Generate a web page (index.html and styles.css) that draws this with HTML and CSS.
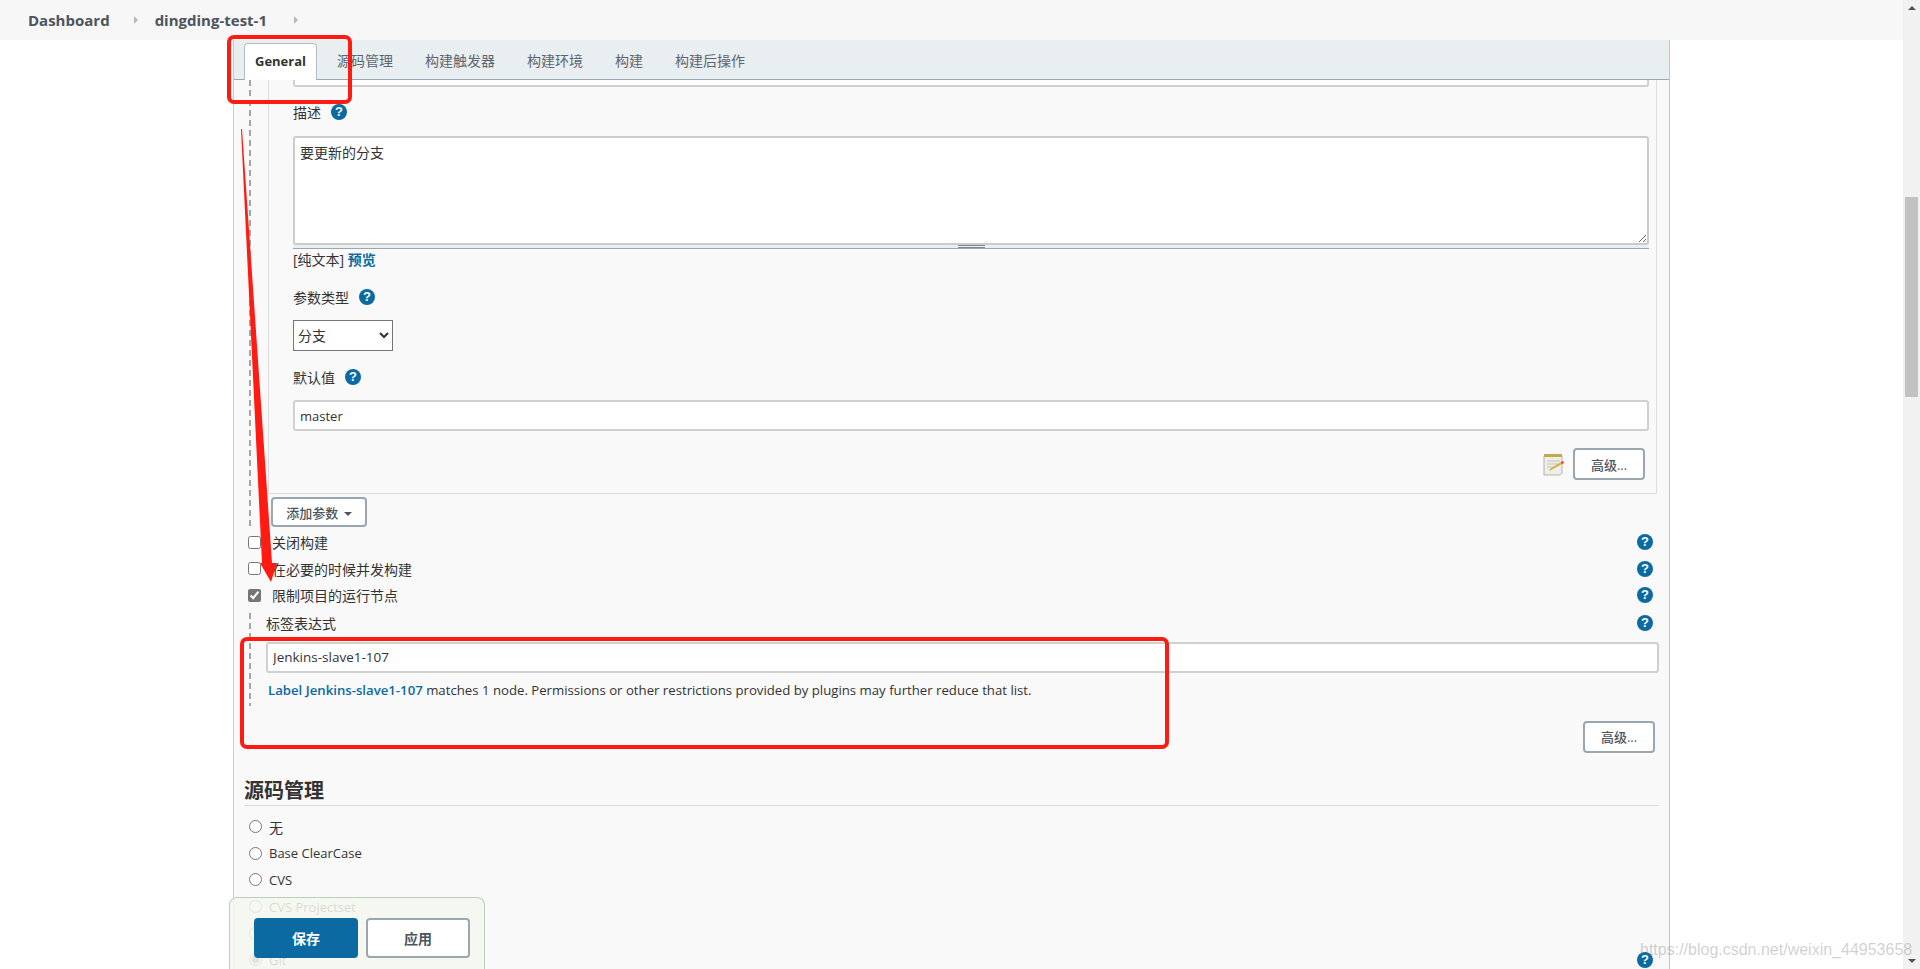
FILE: index.html
```html
<!DOCTYPE html>
<html lang="zh-CN">
<head>
  <meta charset="UTF-8">
  <title>dingding-test-1 Config</title>
  <link rel="stylesheet" href="styles.css">
</head>
<body>
  <div class="page">
    <header class="crumbs">
      <a class="crumb">Dashboard</a>
      <span class="crumb-arrow"></span>
      <a class="crumb">dingding-test-1</a>
      <span class="crumb-arrow"></span>
    </header>

    <main class="panel">
      <nav class="tabs">
        <a class="tab active">General</a>
        <a class="tab">源码管理</a>
        <a class="tab">构建触发器</a>
        <a class="tab">构建环境</a>
        <a class="tab">构建</a>
        <a class="tab">构建后操作</a>
      </nav>

      <form class="config">
        <div class="bracket">
          <div class="param-block">
            <div class="field-stub"></div>

            <div class="field-label desc-label">描述 <span class="help">?</span></div>
            <textarea class="text-area">要更新的分支</textarea>
            <div class="grip-bar"><span class="grip"></span></div>
            <div class="preview-line">[纯文本] <a class="link-bold">预览</a></div>

            <div class="field-label type-label">参数类型 <span class="help">?</span></div>
            <select class="type-select">
              <option>分支</option>
            </select>

            <div class="field-label default-label">默认值 <span class="help">?</span></div>
            <input class="text-input latin" type="text" value="master">

            <div class="block-actions">
              <svg class="notepad" width="23" height="23" viewBox="0 0 23 23">
                <path d="M2 3h18v17l-2 2H2z" fill="#eeeee8" stroke="#b4b4ac"/>
                <rect x="2" y="1" width="18" height="3" fill="#c4a850"/>
                <path d="M5 8h13M5 11h11M5 14h7" stroke="#c4c4bc"/>
                <path d="M7 18l1-2 11-7 1 2-11 6z" fill="#e0a72e"/>
                <path d="M19 9l2-1 1 2-2 1z" fill="#d8392b"/>
              </svg>
              <button class="btn latin" type="button">高级...</button>
            </div>
          </div>
          <button class="btn add-btn latin" type="button">添加参数 <span class="caret"></span></button>
        </div>

        <label class="check-row">
          <input type="checkbox"><span class="check-text">关闭构建</span><span class="help">?</span>
        </label>
        <label class="check-row">
          <input type="checkbox"><span class="check-text">在必要的时候并发构建</span><span class="help">?</span>
        </label>
        <label class="check-row">
          <input type="checkbox" checked><span class="check-text">限制项目的运行节点</span><span class="help">?</span>
        </label>

        <div class="bracket label-group">
          <div class="label-row">标签表达式 <span class="help">?</span></div>
          <input class="text-input node-input" type="text" value="Jenkins-slave1-107">
          <div class="match-msg"><a class="link-bold">Label Jenkins-slave1-107</a> matches 1 node. Permissions or other restrictions provided by plugins may further reduce that list.</div>
        </div>

        <div class="adv-row"><button class="btn latin" type="button">高级...</button></div>

        <h2 class="section-title">源码管理</h2>
        <div class="scm-list">
          <label class="radio-row"><input type="radio" name="scm"><span>无</span></label>
          <label class="radio-row"><input type="radio" name="scm"><span class="latin">Base ClearCase</span></label>
          <label class="radio-row"><input type="radio" name="scm"><span class="latin">CVS</span></label>
          <label class="radio-row"><input type="radio" name="scm"><span class="latin">CVS Projectset</span></label>
          <label class="radio-row"><input type="radio" name="scm"></label>
          <label class="radio-row"><input type="radio" name="scm" checked><span class="latin">Git</span><span class="help">?</span></label>
        </div>
      </form>
    </main>

    <div class="bottom-bar">
      <button class="btn-save" type="button">保存</button>
      <button class="btn-apply" type="button">应用</button>
    </div>
  </div>

  <div class="scrollbar">
    <span class="sb-up"></span>
    <span class="sb-thumb"></span>
    <span class="sb-down"></span>
  </div>

  <!-- screenshot annotations -->
  <svg class="marks" width="1920" height="969" viewBox="0 0 1920 969">
    <rect x="229" y="37" width="121" height="65" rx="5" fill="none" stroke="#ff1a12" stroke-width="4"/>
    <rect x="242" y="639" width="925" height="108" rx="5" fill="none" stroke="#ff1a12" stroke-width="4"/>
    <polygon points="241,129 242,129 272,563 277,563 271,582 260,563 262,563" fill="#ff1a12"/>
  </svg>

  <div class="watermark">https://blog.csdn.net/weixin_44953658</div>
</body>
</html>
```

FILE: styles.css
```css
* {
  box-sizing: border-box;
}

html, body {
  margin: 0;
  height: 969px;
  overflow: hidden;
}

body {
  display: flex;
  background: #fff;
  color: #333;
  font-family: "Open Sans", "Noto Sans CJK SC", sans-serif;
  font-size: 14px;
}

.latin {
  font-size: 13px;
}

.page {
  flex: 1;
  height: 969px;
  overflow: hidden;
}

/* breadcrumbs */
.crumbs {
  display: flex;
  align-items: center;
  height: 40px;
  padding-left: 28px;
  background: #f7f7f7;
  font-size: 15px;
  font-weight: 700;
  color: #4d545d;
}

.crumb-arrow {
  width: 0;
  height: 0;
  margin: 0 17px 0 24px;
  border-left: 4px solid #b8b8b8;
  border-top: 4px solid transparent;
  border-bottom: 4px solid transparent;
}

.crumb-arrow:last-child {
  margin-left: 27px;
}

/* main panel */
.panel {
  width: 1437px;
  height: 929px;
  margin-left: 233px;
  border-left: 1px solid #ccc;
  border-right: 1px solid #c4c4c4;
  background: #f9f9f9;
  overflow: hidden;
}

.tabs {
  display: flex;
  align-items: flex-end;
  height: 40px;
  padding-left: 10px;
  background: #e9eef1;
  border-bottom: 1px solid #9aa7b0;
  font-size: 14px;
  color: #5b6670;
}

.tab {
  display: flex;
  align-items: center;
  height: 36px;
  padding: 0 16px 2px;
}

.tab.active {
  width: 73px;
  height: 37px;
  margin: 0 4px -1px 0;
  padding: 0 0 3px;
  justify-content: center;
  background: #fff;
  border: 1px solid #b4bdc4;
  border-bottom: none;
  border-radius: 4px 4px 0 0;
  font-size: 13px;
  font-weight: 700;
  color: #333;
}

.config {
  padding: 0 10px;
}

.bracket {
  margin-left: 5px;
  padding-left: 2px;
  background: linear-gradient(#a5a5a5 60%, transparent 60%) left top / 2px 10px repeat-y;
}

.param-block {
  height: 414px;
  margin: 0 2px 0 17px;
  padding: 0 7px 0 24px;
  border-left: 1px solid #ddd;
  border-right: 1px solid #ddd;
  border-bottom: 1px solid #ddd;
}

.field-stub {
  height: 7px;
  background: #fff;
  border: 2px solid #d0d0d0;
  border-top: none;
  border-radius: 0 0 3px 3px;
}

.field-label {
  display: flex;
  align-items: center;
  gap: 10px;
  height: 20px;
}

.desc-label {
  margin-top: 15px;
}

.type-label {
  margin-top: 17px;
}

.default-label {
  margin-top: 16px;
}

.help {
  display: inline-block;
  flex: none;
  width: 16px;
  height: 16px;
  border-radius: 50%;
  background: #0b6aa2;
  color: #fff;
  font-family: "Liberation Sans", sans-serif;
  font-size: 13px;
  font-weight: 700;
  line-height: 16px;
  text-align: center;
}

.text-area {
  display: block;
  width: 100%;
  height: 109px;
  margin-top: 14px;
  padding: 4px 5px;
  border: 2px solid #ccc;
  border-radius: 3px;
  background: #fff;
  color: #333;
  font: inherit;
}

.grip-bar {
  display: flex;
  justify-content: center;
  height: 4px;
  background: #e9eef1;
  border-bottom: 1px solid #9aa7b0;
}

.grip {
  width: 27px;
  height: 3px;
  border-top: 1px solid #7d8a92;
  border-bottom: 1px solid #7d8a92;
}

.preview-line {
  height: 20px;
  margin-top: 1px;
  line-height: 20px;
}

.link-bold {
  color: #0b6aa2;
  font-weight: 600;
}

.type-select {
  display: block;
  width: 100px;
  height: 31px;
  margin-top: 13px;
  padding: 0;
  border: 1px solid #767676;
  border-radius: 0;
  background: #fff;
  color: #333;
  font: inherit;
}

.text-input {
  display: block;
  width: 100%;
  height: 31px;
  margin-top: 13px;
  padding: 0 5px;
  border: 2px solid #d0d0d0;
  border-radius: 3px;
  background: #fff;
  color: #333;
  font-family: inherit;
}

.block-actions {
  display: flex;
  justify-content: flex-end;
  align-items: center;
  gap: 8px;
  margin-top: 17px;
  padding-right: 4px;
}

.btn {
  width: 72px;
  height: 32px;
  border: 2px solid #9aa7b0;
  border-radius: 4px;
  background: #fff;
  color: #4d545d;
  font-family: inherit;
  font-weight: 500;
}

.add-btn {
  display: block;
  width: 96px;
  height: 30px;
  margin: 3px 0 0 20px;
}

.caret {
  display: inline-block;
  margin-left: 2px;
  vertical-align: 2px;
  border-top: 4px solid #4d545d;
  border-left: 4px solid transparent;
  border-right: 4px solid transparent;
}

/* option rows */
.check-row {
  display: flex;
  align-items: center;
  height: 26.500px;
  margin-left: 4px;
  padding-right: 6px;
}

.check-row:first-of-type {
  margin-top: 2px;
}

.check-row input {
  width: 13px;
  height: 13px;
  margin: 0 11px 0 0;
  accent-color: #767676;
}

.check-text {
  flex: 1;
}

.label-group {
  height: 93px;
  margin-top: 4px;
}

.label-row {
  display: flex;
  justify-content: space-between;
  align-items: center;
  height: 20px;
  padding: 0 6px 0 15px;
}

.node-input {
  width: 1393px;
  margin: 9px 0 0 15px;
  font-size: 13.500px;
}

.match-msg {
  margin: 7px 0 0 17px;
  font-size: 13.200px;
  line-height: 20px;
}

.adv-row {
  display: flex;
  justify-content: flex-end;
  margin-top: 15px;
  padding-right: 4px;
}

.section-title {
  margin: 24px 0 0;
  padding-bottom: 1px;
  border-bottom: 1px solid #ddd;
  font-size: 20px;
  font-weight: 700;
  line-height: 27px;
  color: #333;
}

.scm-list {
  margin-top: 8px;
}

.radio-row {
  display: flex;
  align-items: center;
  height: 26.600px;
  margin-left: 5px;
  padding-right: 6px;
}

.radio-row input {
  width: 13px;
  height: 13px;
  margin: 0 7px 0 0;
  accent-color: #767676;
}

.radio-row .help {
  margin-left: auto;
}

/* save bar sits over the form */
.bottom-bar {
  position: absolute;
  left: 229px;
  top: 897px;
  display: flex;
  gap: 8px;
  width: 256px;
  height: 72px;
  padding: 20px 0 0 24px;
  background: rgba(245, 248, 239, 0.85);
  border: 1px solid #b9d0bb;
  border-bottom: none;
  border-radius: 8px 8px 0 0;
}

.btn-save, .btn-apply {
  width: 104px;
  height: 40px;
  border-radius: 4px;
  font-family: inherit;
  font-size: 14px;
  font-weight: 700;
}

.btn-save {
  border: none;
  background: #0b6aa2;
  color: #fff;
}

.btn-apply {
  border: 2px solid #9aa7b0;
  background: #fff;
  color: #4d545d;
}

/* browser scrollbar */
.scrollbar {
  position: relative;
  flex: none;
  width: 17px;
  height: 969px;
  background: #f1f1f1;
}

.sb-thumb {
  position: absolute;
  left: 2px;
  top: 197px;
  width: 13px;
  height: 200px;
  background: #c1c1c1;
}

.sb-up, .sb-down {
  position: absolute;
  left: 5px;
  width: 0;
  height: 0;
  border-left: 4px solid transparent;
  border-right: 4px solid transparent;
}

.sb-up {
  top: 6px;
  border-bottom: 4px solid #505050;
}

.sb-down {
  bottom: 6px;
  border-top: 4px solid #505050;
}

.marks {
  position: absolute;
  left: 0;
  top: 0;
  pointer-events: none;
}

.watermark {
  position: absolute;
  left: 1640px;
  top: 940px;
  font-family: "Liberation Sans", sans-serif;
  font-size: 16px;
  line-height: 20px;
  color: rgba(120, 120, 120, 0.35);
  white-space: nowrap;
}
```
